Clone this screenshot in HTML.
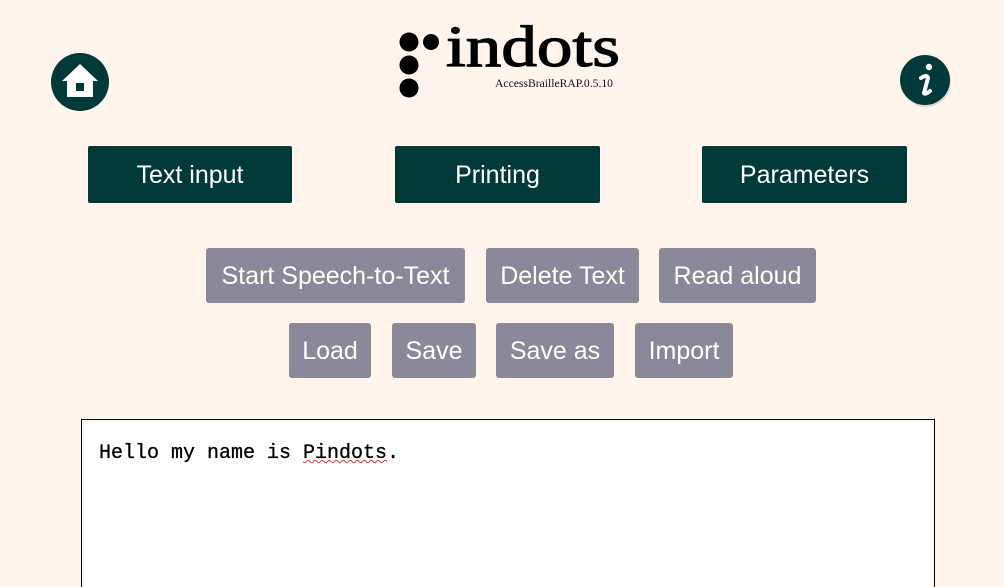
<!DOCTYPE html>
<html><head><meta charset="utf-8"><style>
html,body{margin:0;padding:0;background:#fff5ec;width:1004px;height:587px;overflow:hidden;position:relative;font-family:"Liberation Sans",sans-serif}
.b{position:absolute;color:#fff;display:flex;align-items:center;justify-content:center;font-size:25px;box-sizing:border-box;border-radius:2px;padding-top:2px}
.d{background:#003a38}
.g{background:#8a8999;border-radius:3px}
.ta{position:absolute;left:81px;top:419px;width:854px;height:180px;background:#fff;border:1px solid #000;box-sizing:border-box}
.t{position:absolute;left:17px;top:22px;font-family:"Liberation Mono",monospace;font-size:20px;color:#000;white-space:pre;-webkit-text-stroke:0.3px #000}
</style></head><body>
<svg style="position:absolute;left:0;top:0" width="1004" height="130">
<circle cx="80" cy="82" r="29" fill="#003a38"/>
<path d="M80 64 L62 81 L67 81 L67 97 L93 97 L93 81 L98 81 Z" fill="#fff"/>
<rect x="76" y="83" width="8" height="8" fill="#003a38"/>
<circle cx="926" cy="82" r="25" fill="#bbb" opacity=".5"/>
<circle cx="925" cy="80" r="25" fill="#003a38"/>
<circle cx="929" cy="67" r="3.2" fill="#fff"/>
<path d="M921 78 Q927 74 928 78 L924 93 Q925 95 930 91" stroke="#fff" stroke-width="4" fill="none" stroke-linecap="round"/>
<circle cx="409" cy="42" r="9.5" fill="#000"/>
<circle cx="431" cy="42" r="8" fill="#000"/>
<circle cx="409" cy="65" r="9.5" fill="#000"/>
<circle cx="409" cy="88" r="9.5" fill="#000"/>
<text x="446" y="66" font-family="Liberation Serif,serif" font-size="58" fill="#000" stroke="#000" stroke-width="1.2" textLength="174" lengthAdjust="spacingAndGlyphs">indots</text>
<text x="495" y="87" font-family="Liberation Serif,serif" font-size="11.5" fill="#111" textLength="118" lengthAdjust="spacingAndGlyphs">AccessBrailleRAP.0.5.10</text>
</svg>
<div class="b d" style="left:88px;top:146px;width:204px;height:57px">Text input</div>
<div class="b d" style="left:395px;top:146px;width:205px;height:57px">Printing</div>
<div class="b d" style="left:702px;top:146px;width:205px;height:57px">Parameters</div>
<div class="b g" style="left:206px;top:248px;width:259px;height:55px">Start Speech-to-Text</div>
<div class="b g" style="left:486px;top:248px;width:153px;height:55px">Delete Text</div>
<div class="b g" style="left:659px;top:248px;width:157px;height:55px">Read aloud</div>
<div class="b g" style="left:289px;top:323px;width:82px;height:55px">Load</div>
<div class="b g" style="left:392px;top:323px;width:84px;height:55px">Save</div>
<div class="b g" style="left:496px;top:323px;width:118px;height:55px">Save as</div>
<div class="b g" style="left:635px;top:323px;width:98px;height:55px">Import</div>
<div class="ta"><div class="t">Hello my name is <span style="text-decoration:underline wavy #d33;text-decoration-thickness:1px">Pindots</span>.</div></div>
</body></html>
